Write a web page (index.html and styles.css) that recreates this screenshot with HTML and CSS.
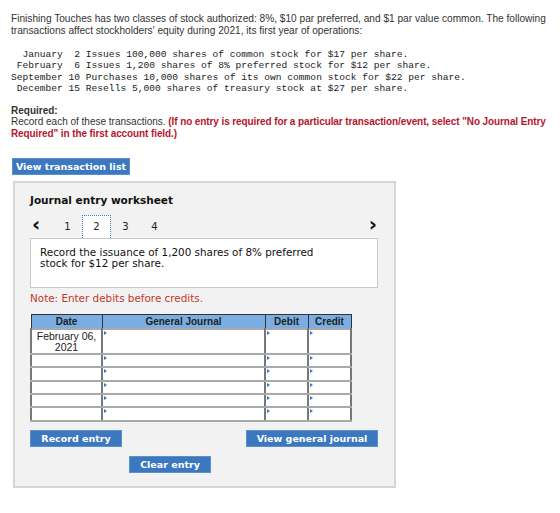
FILE: index.html
```html
<!DOCTYPE html>
<html lang="en">
<head>
    <meta charset="UTF-8">
    <meta name="viewport" content="width=device-width, initial-scale=1.0">
    <title>Journal entry worksheet</title>
    <link rel="stylesheet" href="styles.css">
</head>
<body>
    <p class="intro">Finishing Touches has two classes of stock authorized: 8%, $10 par preferred, and $1 par value common. The following transactions affect stockholders' equity during 2021, its first year of operations:</p>

<pre class="schedule">  January  2 Issues 100,000 shares of common stock for $17 per share.
 February  6 Issues 1,200 shares of 8% preferred stock for $12 per share.
September 10 Purchases 10,000 shares of its own common stock for $22 per share.
 December 15 Resells 5,000 shares of treasury stock at $27 per share.</pre>

    <div class="required">
        <p class="required_title">Required:</p>
        <p>Record each of these transactions. <span class="warn">(If no entry is required for a particular transaction/event, select "No Journal Entry Required" in the first account field.)</span></p>
    </div>

    <button class="btn btn_list">View transaction list</button>

    <div class="worksheet">
        <h2 class="worksheet_title">Journal entry worksheet</h2>

        <div class="steps">
            <span class="chevron">&lsaquo;</span>
            <span class="step">1</span>
            <span class="step step_active">2</span>
            <span class="step">3</span>
            <span class="step">4</span>
            <span class="chevron chevron_next">&rsaquo;</span>
        </div>

        <div class="descricao">
            Record the issuance of 1,200 shares of 8% preferred<br>
            stock for $12 per share.
        </div>

        <p class="nota">Note: Enter debits before credits.</p>

        <table class="journal">
            <thead>
                <tr>
                    <th class="col_date">Date</th>
                    <th class="col_account">General Journal</th>
                    <th class="col_money">Debit</th>
                    <th class="col_money">Credit</th>
                </tr>
            </thead>
            <tbody>
                <tr class="first_row">
                    <td class="date">February 06,<br>2021</td>
                    <td class="pick"></td>
                    <td class="pick"></td>
                    <td class="pick"></td>
                </tr>
                <tr><td></td><td class="pick"></td><td class="pick"></td><td class="pick"></td></tr>
                <tr><td></td><td class="pick"></td><td class="pick"></td><td class="pick"></td></tr>
                <tr><td></td><td class="pick"></td><td class="pick"></td><td class="pick"></td></tr>
                <tr><td></td><td class="pick"></td><td class="pick"></td><td class="pick"></td></tr>
                <tr><td></td><td class="pick"></td><td class="pick"></td><td class="pick"></td></tr>
            </tbody>
        </table>

        <div class="acoes">
            <button class="btn btn_record">Record entry</button>
            <button class="btn btn_view">View general journal</button>
        </div>
        <div class="acoes_centro">
            <button class="btn btn_clear">Clear entry</button>
        </div>
    </div>
</body>
</html>
```

FILE: styles.css
```css
body{
    font-family: "Liberation Sans", Arial, sans-serif;
    margin: 0;
    padding: 13px 11px;
    background-color: #ffffff;
    color: #333;
}

p{
    margin: 0;
}

.intro{
    font-size: 10.15px;
    line-height: 12px;
    width: 540px;
}

.schedule{
    font-family: "Liberation Mono", "Courier New", monospace;
    font-size: 9.6px;
    line-height: 11.35px;
    margin: 12px 0 0 0;
    color: #222;
}

.required{
    margin-top: 12px;
    width: 548px;
    font-size: 10px;
    line-height: 12px;
}

.required_title{
    font-weight: bold;
    line-height: 10px;
}

.warn{
    color: #b5162b;
    font-weight: bold;
    letter-spacing: -0.1px;
}

.btn{
    font-family: "DejaVu Sans", Verdana, sans-serif;
    font-size: 9.5px;
    font-weight: bold;
    color: white;
    background-color: #3b78c0;
    border: 1px solid #5a8fd0;
    padding: 0;
    height: 17px;
    line-height: 15px;
    text-align: center;
    cursor: pointer;
}

.btn_list{
    display: block;
    width: 118px;
    margin: 18px 0 0 1px;
}

.btn_record{ width: 92px; }
.btn_view{ width: 132px; }
.btn_clear{ width: 82px; }

.worksheet{
    margin: 6px 0 0 2px;
    width: 348px;
    padding: 10px 16px 13px 15px;
    background-color: #f2f2f2;
    border: 2px solid #d6d6d6;
    font-family: "DejaVu Sans", Verdana, sans-serif;
}

.worksheet_title{
    margin: 0;
    font-size: 10.5px;
    line-height: 14px;
    color: #111;
}

.steps{
    display: flex;
    align-items: center;
    height: 23px;
    margin-top: 8px;
    font-size: 10px;
    color: #222;
}

.chevron{
    width: 23px;
    font-size: 20px;
    font-weight: bold;
    line-height: 20px;
    padding-left: 2px;
    box-sizing: border-box;
    margin-top: -5px;
    color: #111;
}

.chevron_next{
    margin-left: auto;
    width: auto;
    padding-right: 1px;
}

.step{
    width: 29px;
    height: 23px;
    line-height: 24px;
    text-align: center;
    box-sizing: border-box;
}

.step_active{
    background-color: white;
    border: 1px dotted #3b78c0;
    border-bottom: none;
    line-height: 22px;
}

.descricao{
    background-color: white;
    border: 1px solid #c8c8c8;
    height: 50px;
    padding: 8px 9px 0;
    box-sizing: border-box;
    font-size: 10.4px;
    line-height: 11px;
    color: #111;
}

.nota{
    margin-top: 4px;
    font-size: 10.4px;
    line-height: 12px;
    color: #c0392b;
}

.journal{
    margin-top: 10px;
    border-collapse: collapse;
    font-family: "Liberation Sans", Arial, sans-serif;
    font-size: 10px;
    background-color: white;
}

.journal thead tr{
    height: 14px;
}

.journal th{
    background-color: #7aaee2;
    border: 1.5px solid #333;
    padding: 0;
    font-weight: bold;
    line-height: 11px;
    color: #222;
}

.col_date{ width: 70px; }
.col_account{ width: 162px; }
.col_money{ width: 42px; }

.journal tbody tr{
    height: 13.4px;
}

.journal tbody tr.first_row{
    height: 24px;
}

.journal td{
    border: 2px solid #a9a9a9;
    border-left-color: #777;
    border-right-color: #777;
    padding: 0;
    position: relative;
}

.journal td.date{
    text-align: center;
    vertical-align: top;
    font-size: 10.5px;
    line-height: 11px;
    padding-top: 1px;
    color: #222;
}

/* marcador azul do campo de seleção */
.pick::before{
    content: "";
    position: absolute;
    top: 1px;
    left: 1px;
    border-top: 2px solid transparent;
    border-bottom: 2px solid transparent;
    border-left: 3px solid #3b78c0;
}

.acoes{
    display: flex;
    justify-content: space-between;
    width: 348px;
    margin-top: 8px;
}

.acoes_centro{
    margin-top: 9px;
    padding-left: 99px;
    line-height: 0;
}
```
